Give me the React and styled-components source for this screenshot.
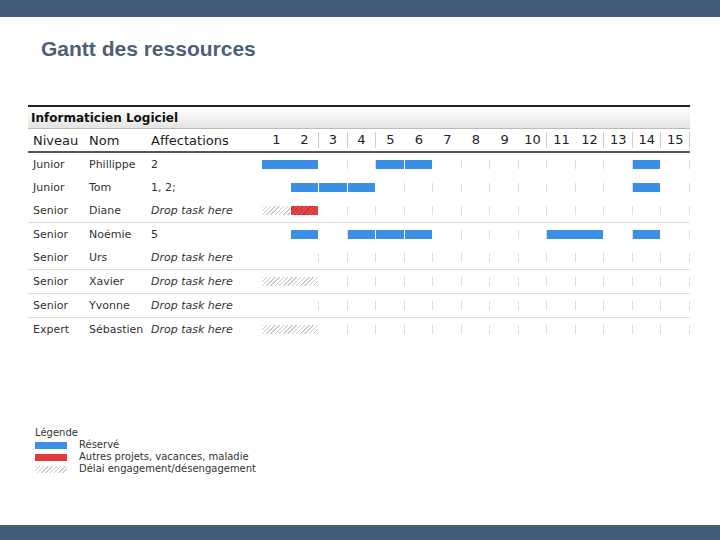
import React from 'react';
import styled, { createGlobalStyle } from 'styled-components';

const Global = createGlobalStyle`
  html, body { margin: 0; background: #fff; }
  body { font-family: "DejaVu Sans", "Liberation Sans", sans-serif; }
`;

const Page = styled.div`
  width: 720px;
  height: 540px;
  display: flex;
  flex-direction: column;
`;

const Bar = styled.div`
  height: ${p => p.h}px;
  background: #455d7a;
`;

const Body = styled.div`
  flex: 1;
  padding: 20px 0 0 41px;
`;

const Title = styled.h1`
  margin: 0;
  font-family: "Liberation Sans", Arial, sans-serif;
  font-size: 21px;
  font-weight: bold;
  color: #4d6079;
`;

const Table = styled.div`
  margin: 44px 0 0 -13px;
  width: 662px;
  font-size: 11px;
  color: #333;
`;

const Caption = styled.div`
  height: 21px;
  border-top: 2px solid #222;
  border-bottom: 1px solid #bbb;
  background: linear-gradient(#fff, #e4e4e4);
  font-weight: bold;
  font-size: 12px;
  color: #111;
  display: flex;
  align-items: center;
  padding-left: 3px;
`;

const Row = styled.div`
  display: grid;
  grid-template-columns: 56px 62px 116px 1fr;
  height: ${p => p.h || 23}px;
  align-items: center;
  border-bottom: ${p => p.line || 'none'};
`;

const Cell = styled.div`
  padding-left: 5px;
  font-style: ${p => (p.italic ? 'italic' : 'normal')};
  white-space: nowrap;
`;

const HeadCell = styled(Cell)`
  font-size: 13px;
  color: #222;
`;

const Days = styled.div`
  display: grid;
  grid-template-columns: repeat(15, 1fr);
  height: 100%;
  align-items: center;
`;

const Num = styled.div`
  grid-row: 1;
  text-align: center;
  font-size: 13px;
  color: #222;
  border-right: ${p => (p.div ? '1px solid #ccc' : 'none')};
  line-height: 16px;
`;

const Tick = styled.div`
  grid-row: 1;
  grid-column: ${p => p.c};
  justify-self: end;
  width: 1px;
  height: 9px;
  background: #ddd;
`;

const Seg = styled.div`
  grid-row: 1;
  grid-column: ${p => p.c} / span ${p => p.n};
  height: 9px;
  margin-right: 1px;
  background: ${p =>
    p.k === 'r' ? '#e04040' : p.k === 'h'
      ? 'repeating-linear-gradient(135deg, #ccc 0 1px, #fff 1px 3px)'
      : '#3a8ee6'};
  ${p => p.k === 'r' && 'background: repeating-linear-gradient(135deg, #e04848 0 2px, #c83030 2px 3px);'}
`;

const Legend = styled.div`
  margin: 86px 0 0 -6px;
  font-size: 10px;
  color: #333;
  line-height: 12px;
`;

const LegendRow = styled.div`
  display: flex;
  align-items: center;
  gap: 12px;
`;

const Swatch = styled.div`
  width: 32px;
  height: 7px;
  background: ${p => p.bg};
`;

const rows = [
  ['Junior', 'Phillippe', '2', [[1, 2, 'b'], [5, 1, 'b'], [6, 1, 'b'], [14, 1, 'b']]],
  ['Junior', 'Tom', '1, 2;', [[2, 1, 'b'], [3, 1, 'b'], [4, 1, 'b'], [14, 1, 'b']]],
  ['Senior', 'Diane', null, [[1, 1, 'h'], [2, 1, 'r']], '1px solid #ddd'],
  ['Senior', 'Noémie', '5', [[2, 1, 'b'], [4, 1, 'b'], [5, 1, 'b'], [6, 1, 'b'], [11, 2, 'b'], [14, 1, 'b']]],
  ['Senior', 'Urs', null, [], '1px solid #ddd'],
  ['Senior', 'Xavier', null, [[1, 2, 'h']], '1px solid #ddd'],
  ['Senior', 'Yvonne', null, [], '1px solid #ddd'],
  ['Expert', 'Sébastien', null, [[1, 2, 'h']]],
];

const headDiv = [false, true, true, true, false, false, false, false, false, true, false, true, true, true, true];

export default function App() {
  return (
    <Page>
      <Global />
      <Bar h={17} />
      <Body>
        <Title>Gantt des ressources</Title>
        <Table>
          <Caption>Informaticien Logiciel</Caption>
          <Row h={22} line="2px solid #555">
            <HeadCell>Niveau</HeadCell>
            <HeadCell>Nom</HeadCell>
            <HeadCell>Affectations</HeadCell>
            <Days>
              {headDiv.map((d, i) => <Num key={i} div={d}>{i + 1}</Num>)}
            </Days>
          </Row>
          {rows.map(([lvl, name, aff, segs, line]) => {
            const covered = new Set();
            segs.forEach(([c, n]) => { for (let i = c; i < c + n; i++) covered.add(i); });
            return (
              <Row key={name} line={line}>
                <Cell>{lvl}</Cell>
                <Cell>{name}</Cell>
                <Cell italic={!aff}>{aff ? ' ' + aff : 'Drop task here'}</Cell>
                <Days>
                  {Array.from({ length: 15 }, (_, i) => i + 1)
                    .filter(c => c > 1 && !covered.has(c))
                    .map(c => <Tick key={c} c={c} />)}
                  {segs.map(([c, n, k]) => <Seg key={c} c={c} n={n} k={k} />)}
                </Days>
              </Row>
            );
          })}
        </Table>
        <Legend>
          <div>Légende</div>
          <LegendRow><Swatch bg="#3a8ee6" />Réservé</LegendRow>
          <LegendRow><Swatch bg="#e53a3a" />Autres projets, vacances, maladie</LegendRow>
          <LegendRow>
            <Swatch bg="repeating-linear-gradient(135deg, #ccc 0 1px, #fff 1px 3px)" />
            Délai engagement/désengagement
          </LegendRow>
        </Legend>
      </Body>
      <Bar h={15} />
    </Page>
  );
}
